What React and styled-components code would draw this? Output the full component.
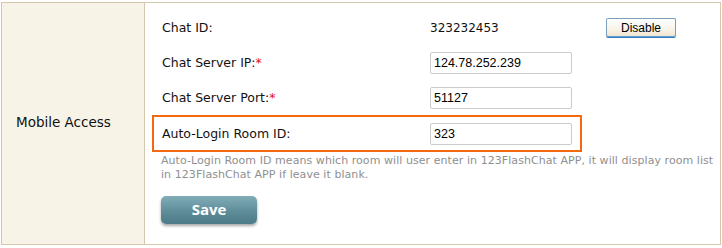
import styled, { createGlobalStyle } from 'styled-components'

const GlobalStyle = createGlobalStyle`
  html, body {
    margin: 0;
    padding: 0;
    background: #ffffff;
  }
  body {
    font-family: "DejaVu Sans", Verdana, sans-serif;
    color: #111;
  }
`

const Table = styled.div`
  margin: 2px 0 0 1px;
  width: 718px;
  height: 241px;
  border: 1px solid #d3c8ae;
  display: grid;
  grid-template-columns: 143px 1fr;
`

const SideCell = styled.div`
  background: #f7f4e7;
  border-right: 1px solid #d3c8ae;
  display: flex;
  align-items: center;
  padding: 0 0 4px 14px;
  font-size: 13.5px;
  color: #111;
`

const Content = styled.div`
  padding: 7px 0 0 16px;
  display: flex;
  flex-direction: column;
`

const Row = styled.div`
  display: flex;
  align-items: center;
  height: 35px;
  box-sizing: border-box;
  ${p => p.$highlight && `
    height: 37px;
    width: 430px;
    margin-left: -9px;
    padding-left: 7px;
    border: 2px solid #f4680f;
  `}
`

const Label = styled.div`
  width: 268px;
  flex-shrink: 0;
  font-size: 12.5px;
  color: #111;
  padding-left: 1px;
`

const Required = styled.span`
  color: #e8101a;
`

const Value = styled.div`
  font-size: 12px;
  color: #111;
  width: 176px;
`

const Input = styled.input`
  box-sizing: border-box;
  width: 142px;
  height: 22px;
  margin: 0;
  padding: 0 3px;
  border: 1px solid #cbcbcb;
  border-radius: 2px;
  font-family: "Liberation Sans", Arial, sans-serif;
  font-size: 12.5px;
  color: #000;
  background: #fff;
  outline: none;
`

const SmallButton = styled.button`
  box-sizing: border-box;
  width: 70px;
  height: 20px;
  margin: 0;
  padding: 0;
  border: 1px solid #7b9ebd;
  border-bottom-color: #3a78b7;
  border-radius: 2px;
  background: linear-gradient(#ffffff, #f8f3e8 60%, #eee2c9);
  font-family: "Liberation Sans", Arial, sans-serif;
  font-size: 12px;
  color: #000;
  box-shadow: inset 0 -1px 0 #5aa0dc;
`

const Help = styled.div`
  margin-top: 2px;
  font-size: 11px;
  line-height: 14px;
  letter-spacing: 0.06px;
  color: #8f8f8f;
  white-space: nowrap;
`

const SaveButton = styled.button`
  margin-top: 14px;
  width: 96px;
  height: 28px;
  border: none;
  border-radius: 5px;
  background: linear-gradient(#81adb8, #5e8d99 55%, #4c7a86);
  box-shadow: 0 2px 3px rgba(0, 0, 0, 0.35);
  color: #fff;
  font-family: "Open Sans", "DejaVu Sans", sans-serif;
  font-weight: 700;
  font-size: 15px;
  padding: 0 0 2px;
`

const App = () => {
  return (
    <>
      <GlobalStyle />
      <Table>
        <SideCell>Mobile Access</SideCell>
        <Content>
          <Row>
            <Label>Chat ID:</Label>
            <Value>323232453</Value>
            <SmallButton>Disable</SmallButton>
          </Row>
          <Row>
            <Label>Chat Server IP:<Required>*</Required></Label>
            <Input defaultValue="124.78.252.239" />
          </Row>
          <Row>
            <Label>Chat Server Port:<Required>*</Required></Label>
            <Input defaultValue="51127" />
          </Row>
          <Row $highlight>
            <Label>Auto-Login Room ID:</Label>
            <Input defaultValue="323" />
          </Row>
          <Help>
            Auto-Login Room ID means which room will user enter in 123FlashChat APP, it will display room list
            <br />
            in 123FlashChat APP if leave it blank.
          </Help>
          <div>
            <SaveButton>Save</SaveButton>
          </div>
        </Content>
      </Table>
    </>
  )
}

export default App
